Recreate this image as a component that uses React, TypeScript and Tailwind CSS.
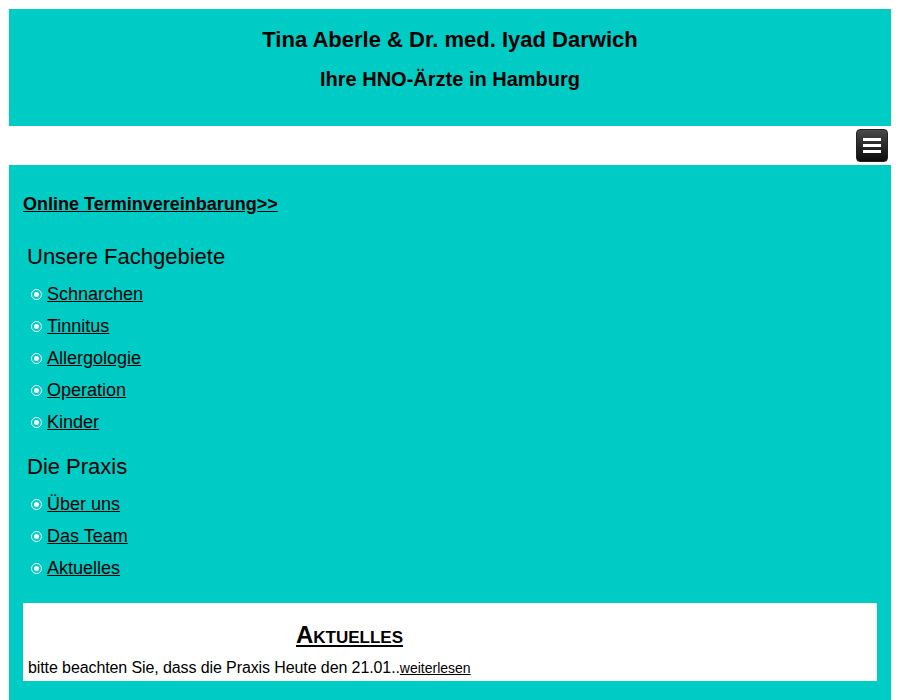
import React from "react";

const fachgebiete = ["Schnarchen", "Tinnitus", "Allergologie", "Operation", "Kinder"];
const praxis = ["Über uns", "Das Team", "Aktuelles"];

const Bullet = () => (
    <span className="inline-flex w-[11px] h-[11px] rounded-full border border-white items-center justify-center shrink-0">
        <span className="w-[5px] h-[5px] rounded-full bg-white" />
    </span>
);

const NavList = ({ items }: { items: string[] }) => (
    <ul className="flex flex-col">
        {items.map(item => (
            <li key={item} className="flex items-center gap-[5px] h-[32px] pl-[8px]">
                <Bullet />
                <a href="#" className="underline text-[18px] text-black leading-none">{item}</a>
            </li>
        ))}
    </ul>
);

export default function App() {
    return (
        <div className="min-h-[700px] bg-white px-[9px] pt-[9px] font-['Liberation_Sans',Arial,sans-serif] text-black">
            <header className="bg-[#00ccc6] h-[117px] flex flex-col items-center pt-[20px]">
                <h1 className="font-bold text-[22px] leading-none">Tina Aberle &amp; Dr. med. Iyad Darwich</h1>
                <h2 className="font-bold text-[20px] leading-none mt-[18px]">Ihre HNO-Ärzte in Hamburg</h2>
            </header>

            <div className="h-[39px] flex items-center justify-end pr-[3px]">
                <button className="w-[32px] h-[33px] rounded-[4px] bg-gradient-to-b from-[#4a4a4a] to-[#0d0d0d] border border-[#222] flex flex-col items-center justify-center gap-[3px]">
                    <span className="w-[18px] h-[3px] bg-white" />
                    <span className="w-[18px] h-[3px] bg-white" />
                    <span className="w-[18px] h-[3px] bg-white" />
                </button>
            </div>

            <main className="bg-[#00ccc6] px-[14px] pt-[28px] pb-[20px]">
                <a href="#" className="font-bold underline text-[18px] leading-none">Online Terminvereinbarung&gt;&gt;</a>

                <h3 className="text-[22px] leading-none mt-[29px] mb-[10px] pl-[4px]">Unsere Fachgebiete</h3>
                <NavList items={fachgebiete} />

                <h3 className="text-[22px] leading-none mt-[18px] mb-[10px] pl-[4px]">Die Praxis</h3>
                <NavList items={praxis} />

                <section className="bg-white mt-[19px] h-[78px] px-[5px] pt-[20px]">
                    <div className="w-[643px] text-center">
                        <span className="font-bold underline text-[24px] leading-none [font-variant:small-caps]">Aktuelles</span>
                    </div>
                    <p className="text-[16px] leading-none mt-[10px] tracking-[-0.1px]">
                        bitte beachten Sie, dass die Praxis Heute den 21.01..<a href="#" className="underline text-[14px] tracking-normal">weiterlesen</a>
                    </p>
                </section>
            </main>
        </div>
    );
}
